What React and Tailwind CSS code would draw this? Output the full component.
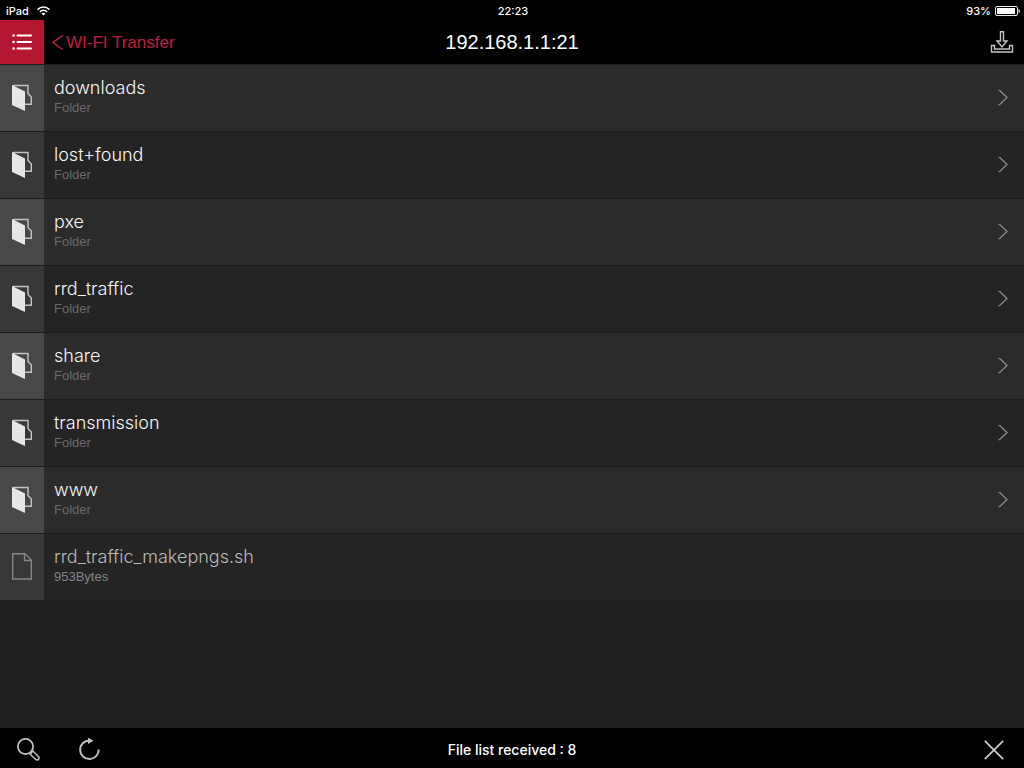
const folders = ['downloads', 'lost+found', 'pxe', 'rrd_traffic', 'share', 'transmission', 'www'];

function FolderIcon() {
  return (
    <svg width="20" height="28" viewBox="0 0 20 28" fill="none" aria-hidden="true">
      <path d="M1 1.500H16V9.500L19.300 13V20.300H13" stroke="#c4c4c4" strokeWidth="1.400" />
      <path d="M0 1L13 7.500V27L0 21Z" fill="#e6e6e6" />
    </svg>
  );
}

function FileIcon() {
  return (
    <svg width="20" height="28" viewBox="0 0 20 28" fill="none" stroke="#858585" strokeWidth="1.400" aria-hidden="true">
      <path d="M0.700 0.700H13L19.300 7V26H0.700Z" />
      <path d="M12.500 0.700V7.500H19.300" />
    </svg>
  );
}

function FolderRow({ name }) {
  return (
    <li className="group bg-[#242424] odd:bg-[#2b2b2b]">
      <a href="#" className="flex h-[67px] border-t border-[#1c1c1c]">
        <span className="flex w-11 shrink-0 items-center justify-center bg-[#383838] group-odd:bg-[#484848]">
          <FolderIcon />
        </span>
        <span className="flex grow flex-col px-2.5 pt-3">
          <span className="font-['Inter',sans-serif] text-[18px] leading-[22px] font-light text-[#f6f6f6]">{name}</span>
          <span className="text-[13px] leading-[18px] text-[#6a6a6a]">Folder</span>
        </span>
        <span className="flex items-center pr-4">
          <svg width="10" height="16" viewBox="0 0 10 16" fill="none" stroke="#8c8c8c" strokeWidth="1.300" aria-hidden="true">
            <path d="M0.500 0.300H1.500L9 7.500L1.500 14.700H0.500" />
          </svg>
        </span>
      </a>
    </li>
  );
}

export default function App() {
  return (
    <div className="flex min-h-screen flex-col bg-[#202020] font-['Liberation_Sans',Arial,sans-serif] text-white">
      <div className="grid h-5 grid-cols-3 items-center bg-black pt-0.5 pr-1 pl-1.5 font-['Inter',sans-serif] text-[11px] leading-4 font-medium">
        <span className="flex items-center gap-2">
          iPad
          <svg width="13" height="10" viewBox="0 0 13 10" fill="none" stroke="#fff" strokeWidth="1.700" aria-hidden="true">
            <path d="M0.600 3.600C4 0.100 9 0.100 12.400 3.600M2.900 5.900C5 3.900 8 3.900 10.100 5.900" />
            <path d="M4.500 7.500Q6.500 5.900 8.500 7.500L6.500 9.600Z" fill="#fff" stroke="none" />
          </svg>
        </span>
        <span className="text-center">22:23</span>
        <span className="flex items-center justify-end gap-1">
          93%
          <svg width="25" height="10" viewBox="0 0 25 10" fill="none" aria-hidden="true">
            <rect x="0.500" y="0.500" width="22" height="9" rx="1.500" stroke="#e8e8e8" />
            <rect x="2" y="2" width="18" height="6" fill="#fff" />
            <path d="M23.500 3Q25 3.500 25 5T23.500 7Z" fill="#e8e8e8" />
          </svg>
        </span>
      </div>

      <header className="grid h-11 grid-cols-[1fr_auto_1fr] items-center bg-black">
        <div className="flex items-center">
          <button type="button" aria-label="Menu" className="flex size-11 items-center justify-center bg-[#b31731]">
            <svg width="20" height="18" viewBox="0 0 20 18" stroke="#fff" strokeWidth="2" strokeLinecap="round" aria-hidden="true">
              <path strokeWidth="2.600" d="M1.600 2.500h.01M1.600 9h.01M1.600 15.500h.01" />
              <path d="M5.500 2.500H19M5.500 9H19M5.500 15.500H19" />
            </svg>
          </button>
          <a href="#" className="flex items-center gap-[3px] pt-0.5 pl-2 text-[17px] leading-5 text-[#c21d3c]">
            <svg width="11" height="16" viewBox="0 0 11 16" fill="none" stroke="currentColor" strokeWidth="1.500" aria-hidden="true">
              <path d="M10.500 0.500L1 7.500L10.500 14.500" />
            </svg>
            WI-FI Transfer
          </a>
        </div>
        <h1 className="text-xl">192.168.1.1:21</h1>
        <div className="flex justify-end pr-2.5">
          <button type="button" aria-label="Download">
            <svg width="24" height="22" viewBox="0 0 24 22" fill="none" stroke="#c4c4c4" strokeWidth="1.400" aria-hidden="true">
              <path d="M10.500 0.700H13.500V10H17L12 16L7 10H10.500Z" />
              <path d="M1.500 14.500H4.500V18H19.500V14.500H22.500V21H1.500Z" />
            </svg>
          </button>
        </div>
      </header>

      <main className="grow">
        <ul>
          {folders.map((name) => (
            <FolderRow key={name} name={name} />
          ))}
          <li className="flex h-[67px] border-t border-[#1c1c1c] bg-[#242424]">
            <span className="flex w-11 shrink-0 items-center justify-center bg-[#383838]">
              <FileIcon />
            </span>
            <span className="flex grow flex-col px-2.5 pt-3">
              <span className="font-['Inter',sans-serif] text-[18px] leading-[22px] font-light text-[#bababa]">rrd_traffic_makepngs.sh</span>
              <span className="text-[13px] leading-[18px] text-[#85858a]">953Bytes</span>
            </span>
          </li>
        </ul>
      </main>

      <footer className="grid h-10 grid-cols-[1fr_auto_1fr] items-center bg-black pt-1">
        <div className="flex items-center gap-9 pl-4">
          <button type="button" aria-label="Search">
            <svg width="24" height="24" viewBox="0 0 24 24" fill="none" stroke="#c0c0c0" strokeWidth="1.800" aria-hidden="true">
              <circle cx="9.500" cy="8.500" r="7.600" />
              <path d="M14.500 13.500L16 15" />
              <path d="M14 16L17 13L22.600 18.700C24 20.700 21.800 22.800 19.800 21.700Z" strokeWidth="1.500" />
            </svg>
          </button>
          <button type="button" aria-label="Refresh">
            <svg width="24" height="24" viewBox="0 0 24 24" fill="none" stroke="#c0c0c0" strokeWidth="2" aria-hidden="true">
              <path d="M22.700 11.500A9.300 9.300 0 1 1 13.300 2.500" />
              <path d="M12 -0.500L17.500 2.700L12 6Z" fill="#c0c0c0" stroke="none" />
            </svg>
          </button>
        </div>
        <p className="font-['Inter',sans-serif] text-[14px] leading-5 font-medium">File list received : 8</p>
        <div className="flex justify-end pr-5">
          <button type="button" aria-label="Close">
            <svg width="20" height="20" viewBox="0 0 20 20" stroke="#c8c8c8" strokeWidth="1.800" aria-hidden="true">
              <path d="M0.800 0.800L19.200 19.200M19.200 0.800L0.800 19.200" />
            </svg>
          </button>
        </div>
      </footer>
    </div>
  );
}
